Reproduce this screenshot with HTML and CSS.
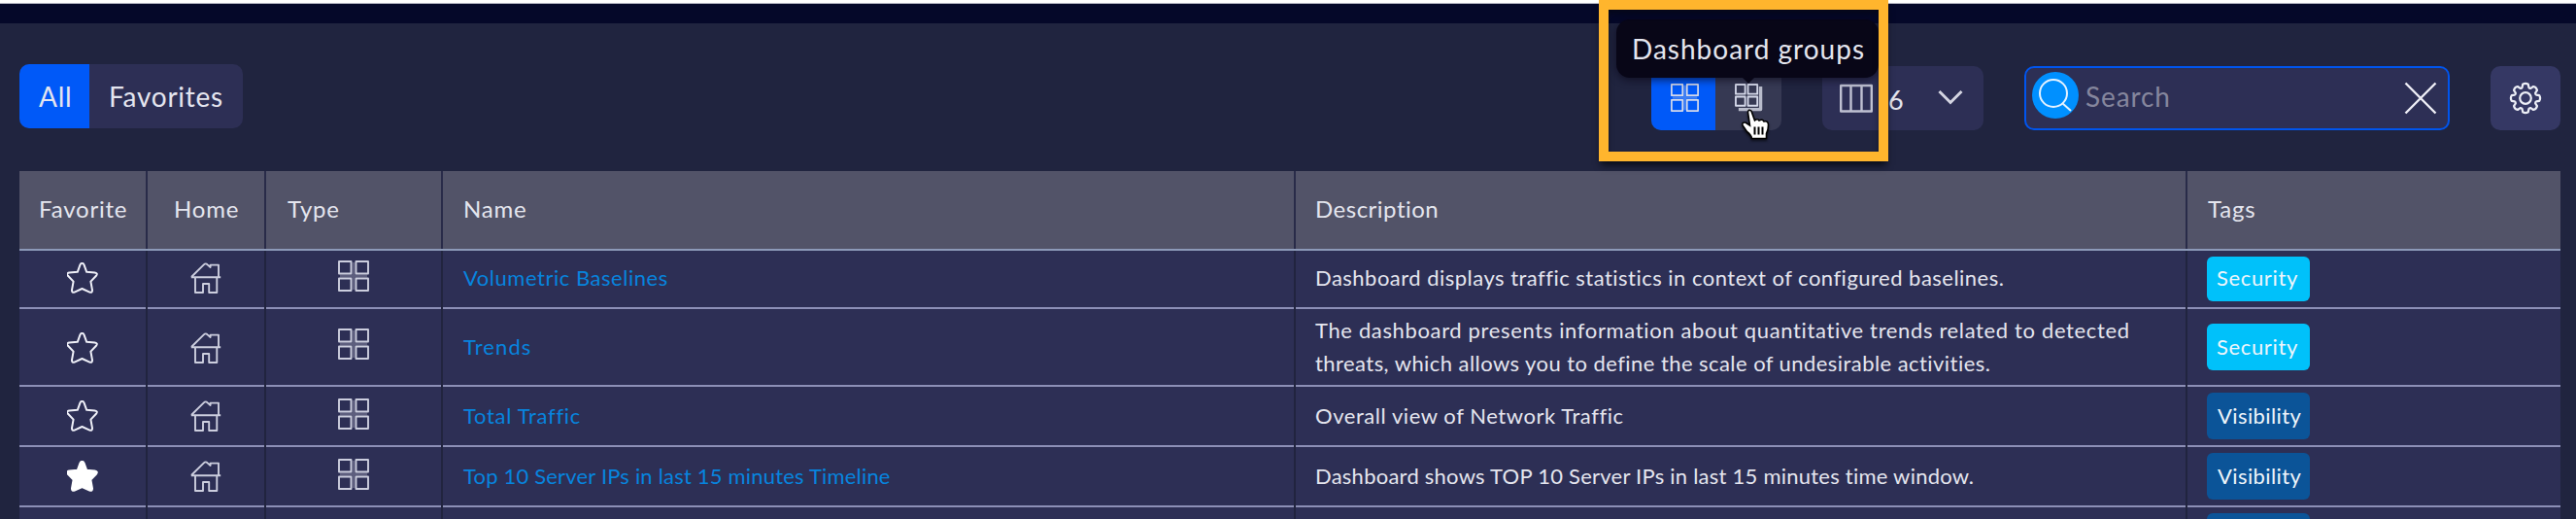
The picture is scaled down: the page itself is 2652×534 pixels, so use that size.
FILE: index.html
```
<!DOCTYPE html>
<html lang="en">
<head>
<meta charset="utf-8">
<title>Dashboards</title>
<link rel="stylesheet" href="styles.css">
</head>
<body>
<svg class="defs" aria-hidden="true">
  <symbol id="star" viewBox="0 0 32 32"><path d="M13.600 2.200Q15.500-.6 17.400 2.200L20.200 9.800L28.600 10.500Q32.200 11.200 30 13.800L24.400 19.600L26 28.400Q26.200 31.600 23.300 30.600L15.500 27L7.700 30.600Q4.800 31.600 5 28.400L6.600 19.600L1 13.800Q-1.200 11.200 2.400 10.500L10.800 9.800Z"/></symbol>
  <symbol id="home" viewBox="0 0 32 32"><path d="M.8 15.200H31.200M1 15L13.800 2.400Q15.800.4 17.600 2.400L20.600 5V2.600H29V15M5 15.500V31H13V22H19.200V31H27.300V15.500"/></symbol>
  <symbol id="grid" viewBox="0 0 32 32"><path d="M1 1H13.500V13.500H1ZM18.500 1H31V13.500H18.500ZM1 18.500H13.500V31H1ZM18.500 18.500H31V31H18.500Z"/><path class="soft" d="M16 2V30M2 16H30"/></symbol>
</svg>
<div class="strip"></div>
<header class="toolbar">
  <div class="tabs"><button class="tab active">All</button><button class="tab">Favorites</button></div>
  <div class="tools">
    <div class="views">
      <div class="view active"><svg class="icon view-icon"><use href="#grid"/></svg></div>
      <div class="view"><svg class="icon view-icon" viewBox="0 0 30 30"><path d="M1 1H11V11H1ZM14 1H24V11H14ZM1 14H11V23.500H1ZM14 14H24V23.500H14Z"/><path class="edge" d="M27.500 3V27.500H4"/></svg></div>
    </div>
    <div class="select">
      <svg class="icon columns-icon" viewBox="0 0 34 30"><path d="M1.200 2H32.800V28.500H1.200ZM11.500 2V28.500M22.500 2V28.500"/></svg>
      <span class="count">6</span>
      <svg class="chevron" viewBox="0 0 26 16"><path d="M1.500 2L13 13.500L24.500 2"/></svg>
    </div>
    <div class="search">
      <span class="search-badge"><svg viewBox="0 0 48 48"><circle cx="22" cy="22" r="14"/><path d="M31 32L40 40"/></svg></span>
      <span class="placeholder">Search</span>
      <svg class="clear" viewBox="0 0 34 34"><path d="M1.500 1.500L32.500 32.500M32.500 1.500L1.500 32.500"/></svg>
    </div>
    <div class="gear"><svg viewBox="-17 -17 34 34"><path d="M-3.400-11.100L-2.800-14.200Q0-16 2.800-14.200L3.400-11.100Q4-10 5.400-10.200L8.100-12Q11.300-11.300 12-8.100L10.200-5.400Q10-4 11.100-3.400L14.200-2.800Q16 0 14.200 2.800L11.100 3.400Q10 4 10.200 5.400L12 8.100Q11.300 11.300 8.100 12L5.400 10.200Q4 10 3.400 11.100L2.800 14.200Q0 16-2.800 14.200L-3.400 11.100Q-4 10-5.400 10.200L-8.100 12Q-11.300 11.300-12 8.100L-10.200 5.400Q-10 4-11.100 3.400L-14.200 2.800Q-16 0-14.200-2.800L-11.100-3.400Q-10-4-10.200-5.400L-12-8.100Q-11.300-11.300-8.100-12L-5.400-10.200Q-4-10-3.400-11.100Z"/><circle r="5.800"/></svg></div>
  </div>
</header>
<main class="table">
  <div class="row head">
    <div class="cell">Favorite</div><div class="cell h-home">Home</div><div class="cell h-type">Type</div><div class="cell">Name</div><div class="cell h-desc">Description</div><div class="cell h-tags">Tags</div>
  </div>
  <div class="row r1">
    <div class="cell mid"><svg class="icon star"><use href="#star"/></svg></div>
    <div class="cell mid"><svg class="icon"><use href="#home"/></svg></div>
    <div class="cell mid type"><svg class="icon"><use href="#grid"/></svg></div>
    <div class="cell name n1">Volumetric Baselines</div>
    <div class="cell desc d1">Dashboard displays traffic statistics in context of configured baselines.</div>
    <div class="cell tags"><span class="tag security">Security</span></div>
  </div>
  <div class="row r2">
    <div class="cell mid"><svg class="icon star"><use href="#star"/></svg></div>
    <div class="cell mid"><svg class="icon"><use href="#home"/></svg></div>
    <div class="cell mid type"><svg class="icon"><use href="#grid"/></svg></div>
    <div class="cell name n2">Trends</div>
    <div class="cell desc d2"><p>The dashboard presents information about quantitative trends related to detected<br><span class="second">threats, which allows you to define the scale of undesirable activities.</span></p></div>
    <div class="cell tags"><span class="tag security">Security</span></div>
  </div>
  <div class="row r3">
    <div class="cell mid"><svg class="icon star"><use href="#star"/></svg></div>
    <div class="cell mid"><svg class="icon"><use href="#home"/></svg></div>
    <div class="cell mid type"><svg class="icon"><use href="#grid"/></svg></div>
    <div class="cell name n3">Total Traffic</div>
    <div class="cell desc d3">Overall view of Network Traffic</div>
    <div class="cell tags"><span class="tag visibility">Visibility</span></div>
  </div>
  <div class="row r4">
    <div class="cell mid"><svg class="icon star filled"><use href="#star"/></svg></div>
    <div class="cell mid"><svg class="icon"><use href="#home"/></svg></div>
    <div class="cell mid type"><svg class="icon"><use href="#grid"/></svg></div>
    <div class="cell name n4">Top 10 Server IPs in last 15 minutes Timeline</div>
    <div class="cell desc d4">Dashboard shows TOP 10 Server IPs in last 15 minutes time window.</div>
    <div class="cell tags"><span class="tag visibility">Visibility</span></div>
  </div>
  <div class="row r5">
    <div class="cell"></div><div class="cell"></div><div class="cell"></div><div class="cell"></div><div class="cell"></div>
    <div class="cell tags"><span class="tag visibility"></span></div>
  </div>
</main>
<div class="tooltip">Dashboard groups</div>
<svg class="cursor" viewBox="0 0 32 34"><path d="M7.500 3.500Q8-.2 11 2.200L14.500 12Q17.500 9.500 19 12Q22.500 10 24 13Q28.500 12 28.500 16.500Q28.500 22 26.500 25.500V30.500H11.500Q11 27 6.500 23.500L2 17Q1 13.500 5 14L9.500 17Z"/><path class="lines" d="M14.500 18.500V26.500M18.500 18.500V26.500M22.500 18.500V26.500"/></svg>
<div class="highlight"></div>
</body>
</html>
```
FILE: styles.css
```
* { box-sizing: border-box; }
body {
  margin: 0;
  width: 2652px;
  height: 534px;
  overflow: hidden;
  position: relative;
  background: #20243f;
  color: #e4e5ee;
  font-family: Lato, "Noto Sans", sans-serif;
  font-size: 22px;
}
.defs { position: absolute; width: 0; height: 0; }
.strip {
  height: 24px;
  background: #050829;
  border-top: 3px solid #fff;
  box-shadow: inset 0 1px 0 #b5b6c2;
}
.toolbar {
  display: flex;
  justify-content: space-between;
  align-items: flex-start;
  height: 152px;
  padding: 42px 16px 0 20px;
}
.tabs { display: flex; height: 66px; border-radius: 10px; overflow: hidden; background: #2d2f55; }
.tab {
  border: 0;
  padding: 0 0 0 20px;
  width: 158px;
  background: none;
  color: #e4e5ef;
  font: 28px Lato, sans-serif;
  letter-spacing: .75px;
  text-align: left;
}
.tab.active { width: 72px; padding-left: 20px; background: #0059f8; }
.tools { display: flex; gap: 42px; padding-top: 2px; }
.views { display: flex; width: 134px; height: 66px; border-radius: 10px; overflow: hidden; background: #363953; }
.view { flex: 1; padding: 18px 0 0 20px; }
.view.active { flex: 0 0 66px; background: #0059f8; }
.icon { display: block; width: 32px; height: 32px; fill: none; stroke: #cccede; stroke-width: 1.9; stroke-linejoin: round; }
.view-icon { width: 29px; height: 29px; stroke: #d5d9ea; }
.soft { opacity: .3; stroke-width: 3; }
.edge { stroke: #b9bccb; stroke-width: 3.5; }
.select { display: flex; align-items: center; width: 166px; height: 66px; padding-left: 18px; border-radius: 10px; background: #2d2f55; }
.columns-icon { width: 34px; height: 30px; stroke: #bfc1d2; stroke-width: 2.4; }
.count { margin: 3px 0 0 16px; width: 16px; font-size: 27px; }
.chevron { width: 26px; height: 16px; margin-left: 35px; margin-top: -3px; fill: none; stroke: #d4d5e2; stroke-width: 3; }
.search { display: flex; align-items: center; width: 438px; height: 66px; padding: 0 11px 0 6px; border: 2px solid #0055ee; border-radius: 10px; background: #2d2f55; }
.search-badge { width: 48px; height: 48px; margin-bottom: 6px; border-radius: 50%; background: #0090ff; }
.search-badge svg { display: block; fill: none; stroke: #e4f2ff; stroke-width: 2; }
.placeholder { margin-left: 7px; margin-bottom: 4px; color: #85869d; font-size: 28px; letter-spacing: .9px; }
.clear { width: 34px; height: 34px; margin-left: auto; fill: none; stroke: #eeeef6; stroke-width: 2.4; }
.gear { display: grid; place-items: center; width: 72px; height: 66px; border-radius: 10px; background: #353864; }
.gear svg { width: 34px; height: 34px; fill: none; stroke: #eceef6; stroke-width: 2.2; stroke-linejoin: round; }
.table { width: 2616px; margin-left: 20px; }
.row {
  display: grid;
  grid-template-columns: 130px 120px 180px 876px 916px 384px;
  column-gap: 2px;
  background: #21243f;
}
.cell { display: flex; align-items: center; padding-left: 20px; background: #2d2f55; border-bottom: 2px solid #8c8fb6; white-space: nowrap; }
.head { height: 82px; border-bottom: 2px solid #8c99b8; font-size: 24px; letter-spacing: .8px; background: #292b49; }
.head .cell { padding-left: 21px; background: #525368; border: 0; padding-bottom: 3px; }
.head .cell:first-child { padding-left: 20px; }
.head .h-home { padding-left: 27px; }
.head .h-type { padding-left: 22px; }
.head .h-desc { padding-left: 20px; letter-spacing: .5px; }
.r1 { height: 60px; }
.r2 { height: 80px; }
.r3, .r4 { height: 62px; }
.mid { justify-content: center; padding: 0; }
.r1 .mid:not(.type) { padding-bottom: 2px; }
.r2 .mid:not(.type) { padding-top: 2px; }
.type { padding-bottom: 4px; }
.r1 .type, .r2 .type { padding-bottom: 6px; }
.star { stroke: #eff0f8; stroke-width: 2; }
.filled { fill: #fff; stroke: #fff; }
.name { padding-left: 21px; color: #0784de; }
.name, .desc { padding-bottom: 1px; }
.r1 .name, .r1 .desc { padding-bottom: 3px; }
.r2 .desc { padding-bottom: 0; }
.desc p { margin: 0; line-height: 34px; }
.n1 { letter-spacing: .53px; }
.n2 { letter-spacing: 1.1px; }
.n3 { letter-spacing: .7px; }
.n4 { letter-spacing: .19px; }
.desc { padding-left: 20px; }
.d1 { letter-spacing: .48px; }
.d2 { letter-spacing: .64px; }
.second { letter-spacing: .44px; }
.d3 { letter-spacing: .56px; }
.d4 { letter-spacing: .24px; }
.tag { display: flex; align-items: center; width: 106px; height: 48px; padding: 0 0 1px 10px; border-radius: 6px; color: #eef5fb; }
.r1 .tag { height: 46px; padding-bottom: 3px; }
.security { background: #00c1fa; letter-spacing: .65px; }
.visibility { background: #0b5498; padding-left: 11px; letter-spacing: .4px; }
/* The last row is cut off by the bottom of the viewport */
.r5 { height: 12px; overflow: hidden; }
.r5 .cell { border: 0; }
.r5 .tags { align-items: flex-start; padding-top: 6px; overflow: hidden; }
.r5 .tag { height: 6px; padding: 0; border-radius: 6px 6px 0 0; }
/* Floating layers over the toolbar */
.tooltip {
  position: absolute;
  left: 1664px;
  top: 20px;
  width: 270px;
  height: 60px;
  padding-left: 16px;
  border-radius: 14px;
  background: #080617;
  box-shadow: 0 2px 8px #080617b0;
  font-size: 28px;
  line-height: 60px;
  letter-spacing: 1px;
  white-space: nowrap;
}
.tooltip::after { content: ""; position: absolute; left: 130px; top: 60px; border: 6px solid transparent; border-top-color: #080617; }
.cursor { position: absolute; left: 1792px; top: 112px; width: 32px; height: 34px; fill: #fff; stroke: #000; stroke-width: 1.6; filter: drop-shadow(0 2px 1px #0008); }
.lines { fill: none; stroke-width: 2; }
.highlight {
  position: absolute;
  left: 1646px;
  top: 0;
  width: 298px;
  height: 166px;
  border: 10px solid #ffb52d;
  box-shadow: 0 6px 7px -2px #05070fd0, inset 0 5px 7px -2px #05070fc0;
}
```
